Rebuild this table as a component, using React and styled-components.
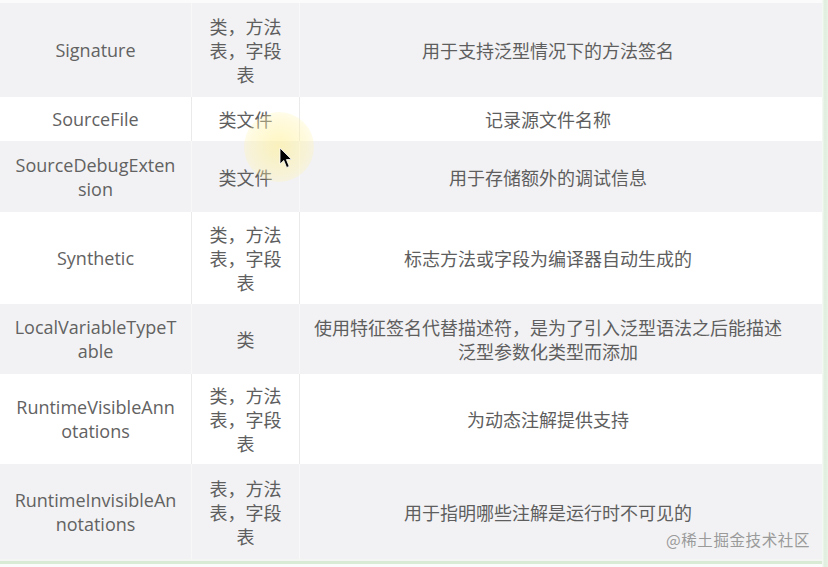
import React from "react";
import styled, { createGlobalStyle } from "styled-components";

const Global = createGlobalStyle`
  html, body { margin: 0; padding: 0; background: #f7f9f6; }
  body { font-family: "Open Sans", "Noto Sans CJK SC", sans-serif; }
`;

const Frame = styled.div`
  position: relative;
  width: 828px;
  height: 567px;
  box-sizing: border-box;
  padding-top: 3px;
  background: linear-gradient(to right, #fafbfa 0, #fafbfa 822px, #eef5ec 823px, #dfeedd 825px, #e8f2e6 828px);
  overflow: hidden;
`;

const Table = styled.div`
  width: 822px;
  display: flex;
  flex-direction: column;
  border-bottom: 2px solid #f3f6f2;
  box-shadow: 0 3px 0 #d9ead5;
`;

const Row = styled.div`
  display: grid;
  grid-template-columns: 192px 108px 1fr;
  height: ${(p) => p.$h}px;
  background: ${(p) => (p.$alt ? "#f2f2f4" : "#ffffff")};
`;

const Cell = styled.div`
  display: flex;
  align-items: center;
  justify-content: center;
  text-align: center;
  color: #5e5e5e;
  line-height: 24px;
  box-sizing: border-box;
  border-right: 1px solid ${(p) => (p.$alt ? "#f8f8f9" : "#eaeaea")};
`;

const NameCell = styled(Cell)`
  font-family: "Open Sans", sans-serif;
  font-size: 18px;
  padding: 0 4px;
  white-space: nowrap;
  color: #626262;
`;

const TypeCell = styled(Cell)`
  font-family: "Noto Sans CJK SC", sans-serif;
  font-size: 18px;
  padding: 0 4px;
`;

const DescCell = styled(Cell)`
  font-family: "Noto Sans CJK SC", sans-serif;
  font-size: 18px;
  padding: 0 34px 0 8px;
  border-right: none;
`;

const Glow = styled.div`
  position: absolute;
  left: 244px;
  top: 112px;
  width: 70px;
  height: 70px;
  border-radius: 50%;
  background: radial-gradient(circle, rgba(255, 240, 150, 0.6) 0%, rgba(255, 243, 170, 0.4) 55%, rgba(255, 248, 200, 0) 100%);
  pointer-events: none;
`;

const Cursor = styled.svg`
  position: absolute;
  left: 279px;
  top: 147px;
  width: 14px;
  height: 24px;
`;

const Watermark = styled.div`
  position: absolute;
  right: 18px;
  bottom: 17px;
  font-family: "Noto Sans CJK SC", sans-serif;
  font-size: 15.5px;
  color: #9a9a9a;
  letter-spacing: 0.6px;
`;

const rows = [
  { h: 94, alt: true, name: ["Signature"], type: ["类，方法", "表，字段", "表"], desc: ["用于支持泛型情况下的方法签名"] },
  { h: 44, alt: false, name: ["SourceFile"], type: ["类文件"], desc: ["记录源文件名称"] },
  { h: 71, alt: true, name: ["SourceDebugExten", "sion"], type: ["类文件"], desc: ["用于存储额外的调试信息"] },
  { h: 92, alt: false, name: ["Synthetic"], type: ["类，方法", "表，字段", "表"], desc: ["标志方法或字段为编译器自动生成的"] },
  { h: 70, alt: true, name: ["LocalVariableTypeT", "able"], type: ["类"], desc: ["使用特征签名代替描述符，是为了引入泛型语法之后能描述", "泛型参数化类型而添加"] },
  { h: 90, alt: false, name: ["RuntimeVisibleAnn", "otations"], type: ["类，方法", "表，字段", "表"], desc: ["为动态注解提供支持"] },
  { h: 95, alt: true, name: ["RuntimeInvisibleAn", "notations"], type: ["表，方法", "表，字段", "表"], desc: ["用于指明哪些注解是运行时不可见的"] },
];

const Lines = ({ lines }) => (
  <div>
    {lines.map((l, i) => (
      <div key={i}>{l}</div>
    ))}
  </div>
);

export default function App() {
  return (
    <>
      <Global />
      <Frame>
        <Table>
          {rows.map((r, i) => (
            <Row key={i} $h={r.h} $alt={r.alt}>
              <NameCell $alt={r.alt}>
                <Lines lines={r.name} />
              </NameCell>
              <TypeCell $alt={r.alt}>
                <Lines lines={r.type} />
              </TypeCell>
              <DescCell $alt={r.alt}>
                <Lines lines={r.desc} />
              </DescCell>
            </Row>
          ))}
        </Table>
        <Glow />
        <Cursor viewBox="0 0 14 24">
          <path d="M1 1 L1 17 L4.8 13.4 L7.6 20.5 L10.2 19.4 L7.4 12.6 L12.5 12.4 Z" fill="#000" stroke="#fff" strokeWidth="0.8" strokeLinejoin="round" />
        </Cursor>
        <Watermark>@稀土掘金技术社区</Watermark>
      </Frame>
    </>
  );
}
